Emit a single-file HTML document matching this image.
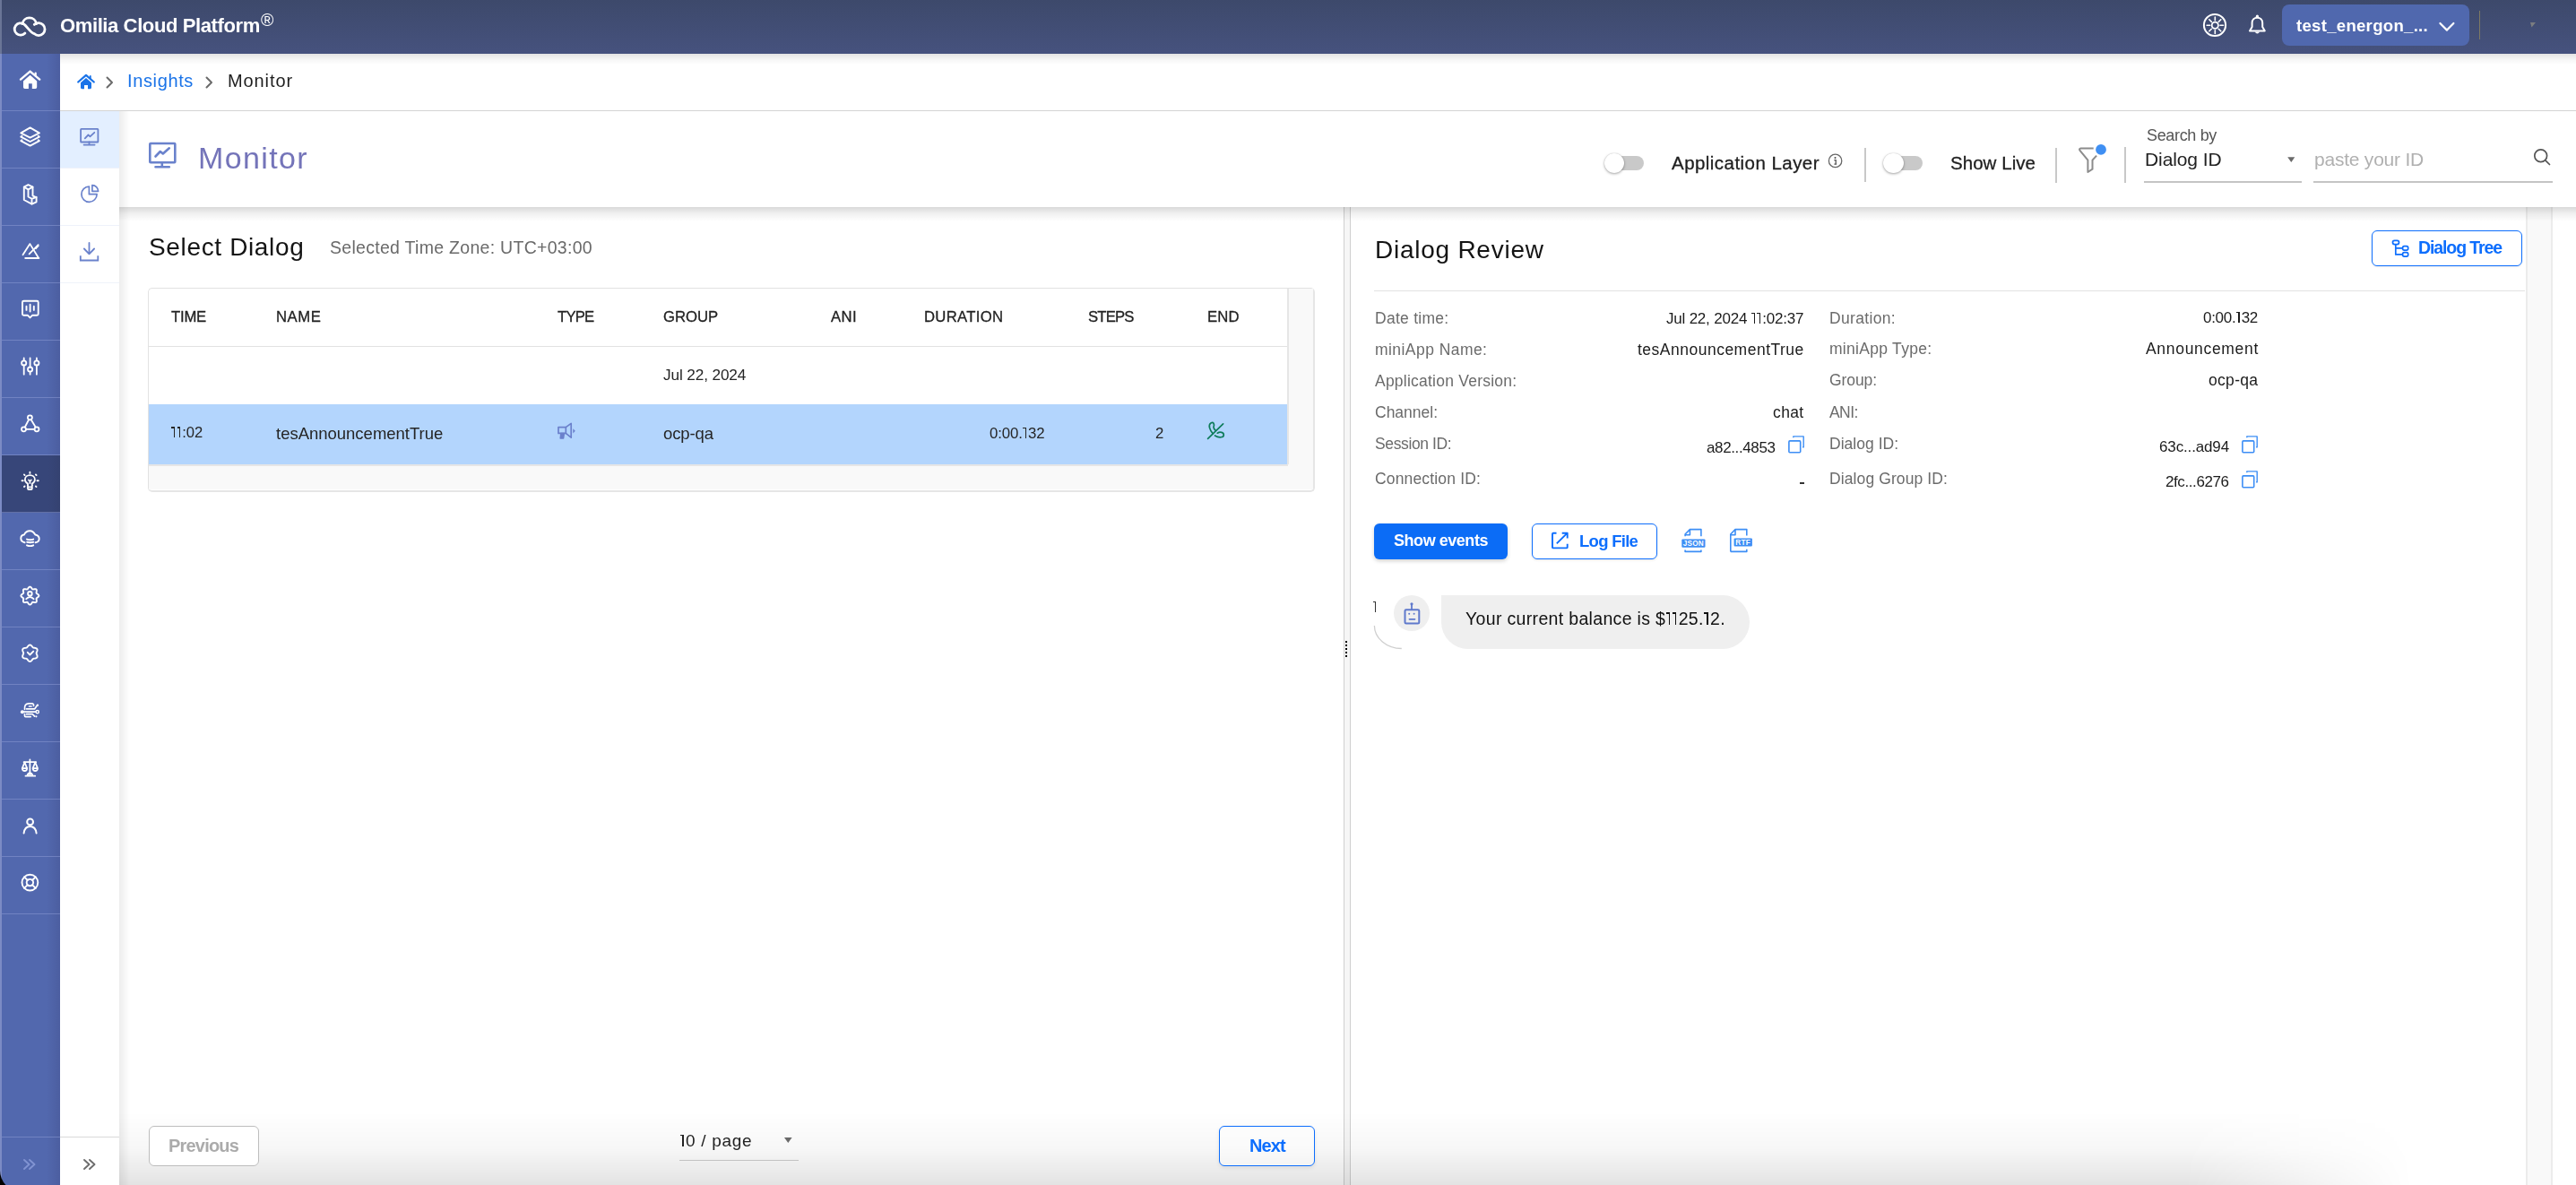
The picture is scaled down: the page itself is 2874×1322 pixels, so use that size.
<!DOCTYPE html><html><head><meta charset="utf-8"><style>
html,body{margin:0;padding:0;}
body{width:2874px;height:1322px;overflow:hidden;position:relative;background:#fff;font-family:"Liberation Sans",sans-serif;}
.t{position:absolute;white-space:nowrap;line-height:1;will-change:transform;}
.b{position:absolute;box-sizing:border-box;}
svg.b{overflow:visible;}
.one{display:inline-block;width:0.37em;height:0.705em;position:relative;}
.one::before{content:'';position:absolute;left:0.17em;top:0;bottom:0;width:0.078em;background:currentColor;}
.one::after{content:'';position:absolute;left:0.03em;top:0;width:0.2em;height:0.075em;background:currentColor;}
</style></head><body>
<div class="b" style="left:0px;top:1270px;width:40px;height:52px;background:#000;"></div>
<div class="b" style="left:0px;top:0px;width:2874px;height:60px;background:linear-gradient(#3d496b,#46527e);"></div>
<div class="b" style="left:0px;top:0px;width:2px;height:60px;background:#6a7596;"></div>
<div class="b" style="left:0px;top:60px;width:67px;height:1269px;background:linear-gradient(90deg,#7c8bc4 0,#7c8bc4 2px,#5268ae 2px,#5268ae 52px,#4c5ea0 67px);border-bottom-left-radius:23px;"></div>
<div class="b" style="left:2px;top:508px;width:65px;height:64px;background:linear-gradient(90deg,#374679 0,#374679 52px,#34416f 67px);"></div>
<div class="b" style="left:2px;top:123px;width:65px;height:1px;background:rgba(150,165,220,0.45);"></div>
<div class="b" style="left:2px;top:187px;width:65px;height:1px;background:rgba(150,165,220,0.45);"></div>
<div class="b" style="left:2px;top:251px;width:65px;height:1px;background:rgba(150,165,220,0.45);"></div>
<div class="b" style="left:2px;top:315px;width:65px;height:1px;background:rgba(150,165,220,0.45);"></div>
<div class="b" style="left:2px;top:379px;width:65px;height:1px;background:rgba(150,165,220,0.45);"></div>
<div class="b" style="left:2px;top:443px;width:65px;height:1px;background:rgba(150,165,220,0.45);"></div>
<div class="b" style="left:2px;top:507px;width:65px;height:1px;background:rgba(150,165,220,0.45);"></div>
<div class="b" style="left:2px;top:571px;width:65px;height:1px;background:rgba(150,165,220,0.45);"></div>
<div class="b" style="left:2px;top:635px;width:65px;height:1px;background:rgba(150,165,220,0.45);"></div>
<div class="b" style="left:2px;top:699px;width:65px;height:1px;background:rgba(150,165,220,0.45);"></div>
<div class="b" style="left:2px;top:763px;width:65px;height:1px;background:rgba(150,165,220,0.45);"></div>
<div class="b" style="left:2px;top:827px;width:65px;height:1px;background:rgba(150,165,220,0.45);"></div>
<div class="b" style="left:2px;top:891px;width:65px;height:1px;background:rgba(150,165,220,0.45);"></div>
<div class="b" style="left:2px;top:955px;width:65px;height:1px;background:rgba(150,165,220,0.45);"></div>
<div class="b" style="left:2px;top:1019px;width:65px;height:1px;background:rgba(150,165,220,0.45);"></div>
<div class="b" style="left:2px;top:1268px;width:65px;height:1px;background:rgba(150,165,220,0.45);"></div>
<div class="b" style="left:67px;top:60px;width:66px;height:1262px;background:#fff;"></div>
<div class="b" style="left:67px;top:124px;width:66px;height:64px;background:#e3efff;"></div>
<div class="b" style="left:67px;top:187px;width:66px;height:1px;background:#eef2fa;"></div>
<div class="b" style="left:67px;top:251px;width:66px;height:1px;background:#eef2fa;"></div>
<div class="b" style="left:67px;top:315px;width:66px;height:1px;background:#eef2fa;"></div>
<div class="b" style="left:67px;top:1268px;width:66px;height:1px;background:#d9d9d9;"></div>
<div class="b" style="left:67px;top:60px;width:2807px;height:63px;background:#fff;"></div>
<div class="b" style="left:67px;top:60px;width:2807px;height:12px;background:linear-gradient(rgba(0,0,0,0.11),rgba(0,0,0,0.03) 60%,rgba(0,0,0,0));"></div>
<div class="b" style="left:67px;top:123px;width:2807px;height:1px;background:#d4d4d4;"></div>
<div class="b" style="left:133px;top:124px;width:12px;height:1198px;background:linear-gradient(90deg,rgba(0,0,0,0.07),rgba(0,0,0,0));"></div>
<div class="b" style="left:1499px;top:231px;width:8px;height:1091px;background:#f6f6f6;border-left:1.5px solid #cfcfcf;border-right:1.5px solid #cfcfcf;"></div>
<div class="b" style="left:2818px;top:231px;width:30px;height:1091px;background:#f9f9f9;border-left:2px solid #ececec;border-right:2px solid #ececec;"></div>
<div class="b" style="left:133px;top:231px;width:2741px;height:16px;background:linear-gradient(rgba(0,0,0,0.15),rgba(0,0,0,0.06) 45%,rgba(0,0,0,0));"></div>
<div class="b" style="left:133px;top:1240px;width:2560px;height:82px;background:linear-gradient(rgba(0,0,0,0),rgba(0,0,0,0.03) 50%,rgba(0,0,0,0.11));-webkit-mask-image:linear-gradient(90deg,#000 90%,transparent 100%);"></div>
<svg class="b" style="left:0px;top:0px;" width="60" height="60" viewBox="0 0 60 60" fill="none"><g stroke="#fff" stroke-width="2.8" stroke-linecap="round" fill="none"><path d="M27.9 37.0 A6.7 6.7 0 1 1 26.6 26.9 C30.5 29.8 34 36.5 38.2 37.6 A7.0 7.0 0 1 0 38.3 27.4"/><path d="M25.0 26.6 A7.9 7.9 0 0 1 40.6 26.6"/></g></svg>
<div class="t" style="left:67.00px;top:18.00px;font-size:22.09px;letter-spacing:-0.428px;color:#fff;font-weight:700;">Omilia Cloud Platform</div>
<div class="t" style="left:290.50px;top:13.00px;font-size:19.50px;letter-spacing:0.632px;color:#fff;">®</div>
<svg class="b" style="left:2440px;top:0px;" width="60" height="60" viewBox="0 0 60 60" fill="none"><g stroke="#fff" fill="none"><circle cx="31" cy="28" r="12.1" stroke-width="2"/><circle cx="31.3" cy="28.3" r="3.6" stroke-width="1.8"/><line x1="36.90" y1="28.30" x2="40.50" y2="28.30" stroke-width="1.6" stroke-linecap="round"/><line x1="25.70" y1="28.30" x2="22.10" y2="28.30" stroke-width="1.6" stroke-linecap="round"/><line x1="31.30" y1="33.90" x2="31.30" y2="37.50" stroke-width="1.6" stroke-linecap="round"/><line x1="31.30" y1="22.70" x2="31.30" y2="19.10" stroke-width="1.6" stroke-linecap="round"/><line x1="35.26" y1="32.26" x2="37.80" y2="34.80" stroke-width="1.6" stroke-linecap="round"/><line x1="27.34" y1="32.26" x2="24.80" y2="34.80" stroke-width="1.6" stroke-linecap="round"/><line x1="35.26" y1="24.34" x2="37.80" y2="21.80" stroke-width="1.6" stroke-linecap="round"/><line x1="27.34" y1="24.34" x2="24.80" y2="21.80" stroke-width="1.6" stroke-linecap="round"/></g></svg>
<svg class="b" style="left:2500px;top:0px;" width="40" height="60" viewBox="0 0 40 60" fill="none"><g stroke="#fff" stroke-width="2" fill="none" stroke-linejoin="round"><path d="M10 34.5 L12.6 30 L12.6 25.6 C12.6 21.8 15.2 19.7 18.4 19.7 C21.6 19.7 24.2 21.8 24.2 25.6 L24.2 30 L26.8 34.5 Z"/></g><path d="M15.6 35.5 Q18.4 39.5 21.2 35.5 Z" fill="#fff"/><circle cx="18.4" cy="18.2" r="1.6" fill="#fff"/></svg>
<div class="b" style="left:2546px;top:5px;width:209px;height:46px;background:#5068ae;border-radius:8px;"></div>
<div class="t" style="left:2562.00px;top:20.00px;font-size:18.60px;letter-spacing:0.272px;color:#fff;font-weight:700;">test_energon_...</div>
<svg class="b" style="left:2715px;top:15px;" width="30" height="30" viewBox="0 0 30 30" fill="none"><path d="M7.4 11 L15 18.6 L22.4 11" stroke="#fff" stroke-width="2.2" fill="none" stroke-linecap="round" stroke-linejoin="round"/></svg>
<div class="b" style="left:2766px;top:12px;width:1.2px;height:32px;background:#7f7a62;"></div>
<svg class="b" style="left:2820px;top:22px;" width="12" height="12" viewBox="0 0 12 12" fill="none"><path d="M3 3 L9 3 L4.5 8.5 Z" fill="#7b7d80"/></svg>
<svg class="b" style="left:13px;top:70px;" width="40" height="40" viewBox="0 0 40 40" fill="none"><path d="M10 18.6 L20.6 9.6 L31.2 18.6" stroke="#fff" fill="none" stroke-linecap="round" stroke-linejoin="round" stroke-width="2.4"/><path d="M26.7 11.5 L26.7 14.5" stroke="#fff" stroke-width="2.2" stroke-linecap="round"/><path d="M13 20.5 L20.6 13.8 L28.2 20.5 L28.2 27.3 Q28.2 29 26.5 29 L22.8 29 L22.8 23.2 L18.9 23.2 L18.9 29 L14.7 29 Q13 29 13 27.3 Z" fill="#fff"/></svg>
<svg class="b" style="left:13px;top:134px;" width="40" height="40" viewBox="0 0 40 40" fill="none"><g stroke="#fff" fill="none" stroke-linecap="round" stroke-linejoin="round" stroke-width="1.9"><path d="M10.3 14.4 L20.6 8.4 L30.9 14.4 L20.6 19.6 Z"/><path d="M11.5 17.8 L10.3 18.6 L20.6 24 L30.9 18.6 L29.7 17.8"/><path d="M11.5 22.3 L10.3 23.1 L20.6 28.6 L30.9 23.1 L29.7 22.3"/></g></svg>
<svg class="b" style="left:13px;top:198px;" width="40" height="40" viewBox="0 0 40 40" fill="none"><g stroke="#fff" fill="none" stroke-linecap="round" stroke-linejoin="round" stroke-width="1.9"><path d="M13.8 10.7 L18.5 8.2 L23.5 10.6 L23.5 20.3 L27.6 22.3 L27.6 27.3 L22.5 29.6 L13.8 25 Z"/><path d="M13.8 10.7 L18.5 13.3 L23.5 10.6 M18.5 13.3 L18.5 21.5 L22.5 23.8 L27.6 21.8 M22.5 23.8 L22.5 29.6"/></g></svg>
<svg class="b" style="left:13px;top:262px;" width="40" height="40" viewBox="0 0 40 40" fill="none"><g stroke="#fff" fill="none" stroke-linecap="round" stroke-linejoin="round" stroke-width="1.8"><path d="M12.5 22.3 L20.4 10.1 L29.7 25.3"/><path d="M15.2 26 L30.4 26"/><path d="M19.6 21.3 L29.7 11.1"/></g><path d="M25.5 15.5 L29 11 L30.8 12.2 L27.3 16.3 Z" fill="#fff"/></svg>
<svg class="b" style="left:13px;top:326px;" width="40" height="40" viewBox="0 0 40 40" fill="none"><g stroke="#fff" fill="none" stroke-linecap="round" stroke-linejoin="round" stroke-width="1.9"><path d="M13.5 9.8 L28.2 9.8 Q29.7 9.8 29.7 11.3 L29.7 24.2 Q29.7 25.7 28.2 25.7 L23.2 25.7 L20.5 28.4 L17.8 25.7 L13.5 25.7 Q12 25.7 12 24.2 L12 11.3 Q12 9.8 13.5 9.8 Z"/><path d="M16.5 15.7 L16.5 19.9 M20.6 13.7 L20.6 21.6 M24.8 15.7 L24.8 19.9"/></g></svg>
<svg class="b" style="left:13px;top:390px;" width="40" height="40" viewBox="0 0 40 40" fill="none"><g stroke="#fff" fill="none" stroke-linecap="round" stroke-linejoin="round" stroke-width="1.8"><path d="M13.7 9.5 L13.7 12.3 M13.7 17.5 L13.7 27.7 M20.6 9.5 L20.6 19.5 M20.6 24.7 L20.6 27.7 M27.9 9.5 L27.9 12.3 M27.9 17.5 L27.9 27.7"/><circle cx="13.7" cy="14.9" r="2.6"/><circle cx="20.6" cy="22.1" r="2.6"/><circle cx="27.9" cy="14.9" r="2.6"/></g></svg>
<svg class="b" style="left:13px;top:454px;" width="40" height="40" viewBox="0 0 40 40" fill="none"><g stroke="#fff" fill="none" stroke-linecap="round" stroke-linejoin="round" stroke-width="1.8"><circle cx="20.4" cy="11.8" r="2.5"/><circle cx="13.5" cy="24.8" r="2.5"/><circle cx="28" cy="24.8" r="2.5"/><path d="M19.2 14 L14.8 22.5 M21.6 14 L26.7 22.5 M16 24.8 L25.5 24.8"/></g></svg>
<svg class="b" style="left:13px;top:518px;" width="40" height="40" viewBox="0 0 40 40" fill="none"><g stroke="#fff" fill="none" stroke-linecap="round" stroke-linejoin="round" stroke-width="1.8"><path d="M18 23.2 L18 21.6 C15.6 20.3 14.9 18.5 14.9 17 C14.9 14 17.3 12.1 20.4 12.1 C23.5 12.1 25.9 14 25.9 17 C25.9 18.5 25.2 20.3 22.8 21.6 L22.8 23.2"/><path d="M18 23.2 L18 27 Q18 28 19 28 L21.8 28 Q22.8 28 22.8 27 L22.8 23.2 M18 25.3 L22.8 25.3"/><path d="M19 17.5 L20.4 19 L21.8 17.5 M20.4 19 L20.4 21"/></g><g stroke="#fff" stroke-width="1.9" stroke-linecap="round"><path d="M20.4 8.8 L20.4 9.9 M13.9 11.4 L14.6 12.1 M26.9 11.4 L27.6 12.1 M11.5 18.2 L12.7 18.2 M28.5 18.2 L29.8 18.2 M14 25 L14.6 24.4 M27.5 25 L26.9 24.4"/></g></svg>
<svg class="b" style="left:13px;top:582px;" width="40" height="40" viewBox="0 0 40 40" fill="none"><g stroke="#fff" fill="none" stroke-linecap="round" stroke-linejoin="round" stroke-width="1.9"><path d="M14.6 23.3 C11.6 22.6 10.3 20.6 10.3 18.6 C10.3 16.3 12 14.7 14 14.5 C15.2 11.6 17.6 10.2 20.4 10.2 C23.4 10.2 25.1 12.2 26.3 14.5 C28.7 15 30.7 16.5 30.7 19 C30.7 21.2 29.2 22.8 26.6 23.3"/><path d="M17 19.6 Q20.7 21 24.2 19.6 M17.2 22.8 Q20.7 23.6 24.2 22.8 M17 26.3 Q20.7 28 24.2 26.3"/></g></svg>
<svg class="b" style="left:13px;top:646px;" width="40" height="40" viewBox="0 0 40 40" fill="none"><g stroke="#fff" fill="none" stroke-linecap="round" stroke-linejoin="round" stroke-width="1.9"><path d="M20.40 8.60 L21.04 8.77 L21.63 9.23 L22.14 9.87 L22.56 10.53 L22.95 11.07 L23.38 11.39 L23.92 11.47 L24.57 11.37 L25.34 11.20 L26.15 11.10 L26.90 11.19 L27.47 11.53 L27.81 12.10 L27.90 12.85 L27.80 13.66 L27.63 14.43 L27.53 15.08 L27.61 15.62 L27.93 16.05 L28.47 16.44 L29.13 16.86 L29.77 17.37 L30.23 17.96 L30.40 18.60 L30.23 19.24 L29.77 19.83 L29.13 20.34 L28.47 20.76 L27.93 21.15 L27.61 21.58 L27.53 22.12 L27.63 22.77 L27.80 23.54 L27.90 24.35 L27.81 25.10 L27.47 25.67 L26.90 26.01 L26.15 26.10 L25.34 26.00 L24.57 25.83 L23.92 25.73 L23.38 25.81 L22.95 26.13 L22.56 26.67 L22.14 27.33 L21.63 27.97 L21.04 28.43 L20.40 28.60 L19.76 28.43 L19.17 27.97 L18.66 27.33 L18.24 26.67 L17.85 26.13 L17.42 25.81 L16.88 25.73 L16.23 25.83 L15.46 26.00 L14.65 26.10 L13.90 26.01 L13.33 25.67 L12.99 25.10 L12.90 24.35 L13.00 23.54 L13.17 22.78 L13.27 22.12 L13.19 21.58 L12.87 21.15 L12.33 20.76 L11.67 20.34 L11.03 19.83 L10.57 19.24 L10.40 18.60 L10.57 17.96 L11.03 17.37 L11.67 16.86 L12.33 16.44 L12.87 16.05 L13.19 15.62 L13.27 15.08 L13.17 14.43 L13.00 13.66 L12.90 12.85 L12.99 12.10 L13.33 11.53 L13.90 11.19 L14.65 11.10 L15.46 11.20 L16.22 11.37 L16.88 11.47 L17.42 11.39 L17.85 11.07 L18.24 10.53 L18.66 9.87 L19.17 9.23 L19.76 8.77 Z"/><circle cx="20.4" cy="16.3" r="2.3"/><path d="M16.3 22.2 Q20.4 17.8 24.5 22.2"/></g></svg>
<svg class="b" style="left:13px;top:710px;" width="40" height="40" viewBox="0 0 40 40" fill="none"><g stroke="#fff" fill="none" stroke-linecap="round" stroke-linejoin="round" stroke-width="1.9"><path d="M20.40 9.50 L21.00 9.60 L21.56 9.87 L22.07 10.28 L22.52 10.78 L22.91 11.30 L23.27 11.78 L23.62 12.17 L24.00 12.46 L24.44 12.65 L24.96 12.76 L25.55 12.82 L26.20 12.90 L26.85 13.04 L27.47 13.28 L27.99 13.63 L28.37 14.10 L28.58 14.66 L28.63 15.29 L28.53 15.94 L28.32 16.58 L28.07 17.17 L27.83 17.72 L27.66 18.22 L27.60 18.70 L27.66 19.18 L27.83 19.68 L28.07 20.23 L28.32 20.82 L28.53 21.46 L28.63 22.11 L28.58 22.74 L28.37 23.30 L27.99 23.77 L27.47 24.12 L26.85 24.36 L26.20 24.50 L25.55 24.58 L24.96 24.64 L24.44 24.75 L24.00 24.94 L23.62 25.23 L23.27 25.62 L22.91 26.10 L22.52 26.62 L22.07 27.12 L21.56 27.53 L21.00 27.80 L20.40 27.90 L19.80 27.80 L19.24 27.53 L18.73 27.12 L18.28 26.62 L17.89 26.10 L17.53 25.62 L17.18 25.23 L16.80 24.94 L16.36 24.75 L15.84 24.64 L15.25 24.58 L14.60 24.50 L13.95 24.36 L13.33 24.12 L12.81 23.77 L12.43 23.30 L12.22 22.74 L12.17 22.11 L12.27 21.46 L12.48 20.82 L12.73 20.23 L12.97 19.68 L13.14 19.18 L13.20 18.70 L13.14 18.22 L12.97 17.72 L12.73 17.17 L12.48 16.58 L12.27 15.94 L12.17 15.29 L12.22 14.66 L12.43 14.10 L12.81 13.63 L13.33 13.28 L13.95 13.04 L14.60 12.90 L15.25 12.82 L15.84 12.76 L16.36 12.65 L16.80 12.46 L17.18 12.17 L17.53 11.78 L17.89 11.30 L18.28 10.78 L18.73 10.28 L19.24 9.87 L19.80 9.60 Z"/><path d="M17.8 17.8 L20.4 20.5 L24.2 16.6"/></g></svg>
<svg class="b" style="left:13px;top:774px;" width="40" height="40" viewBox="0 0 40 40" fill="none"><g stroke="#fff" fill="none" stroke-linecap="round" stroke-linejoin="round" stroke-width="1.7"><path d="M14.5 17.3 Q14 11 19 10.8 L23 10.8 Q24.8 11 24.5 13.5"/><path d="M19.5 14 L22 14"/><path d="M16.5 16.8 L25.8 16.8 L28.2 13.3"/><path d="M13.5 20.2 L26.8 20.2"/><path d="M14.5 22.5 L14.5 24.5 Q14.5 25.6 15.6 25.6 L21.2 25.6"/><path d="M16.5 22.7 L23.2 22.7 L25.6 25.2"/></g><circle cx="11.9" cy="20.2" r="2" fill="#fff"/><circle cx="28.7" cy="20.2" r="1.6" stroke="#fff" stroke-width="1.5" fill="none"/><circle cx="28.9" cy="12.7" r="1.2" fill="#fff"/><circle cx="27.4" cy="25.3" r="1.1" fill="#fff"/></svg>
<svg class="b" style="left:13px;top:838px;" width="40" height="40" viewBox="0 0 40 40" fill="none"><g stroke="#fff" fill="none" stroke-linecap="round" stroke-linejoin="round" stroke-width="1.8"><path d="M20.4 9.5 L20.4 26.5 M13.6 12.2 L27.2 12.2"/><path d="M14.5 12.5 L11.8 19.2 Q12 22 14.5 22 Q17 22 17.2 19.2 Z M11.8 19.2 L17.2 19.2"/><path d="M26.3 12.5 L23.6 19.2 Q23.8 22 26.3 22 Q28.8 22 29 19.2 Z M23.6 19.2 L29 19.2"/><path d="M15.5 27.7 L26.2 27.7 M17.4 27.5 Q18 24.8 20.4 24.5 Q22.8 24.8 23.4 27.5"/></g></svg>
<svg class="b" style="left:13px;top:902px;" width="40" height="40" viewBox="0 0 40 40" fill="none"><g stroke="#fff" fill="none" stroke-linecap="round" stroke-linejoin="round" stroke-width="2"><circle cx="20.6" cy="14.9" r="3.4"/><path d="M13.6 27.5 Q14.5 20 20.6 20 Q26.7 20 27.6 27.5"/></g></svg>
<svg class="b" style="left:13px;top:966px;" width="40" height="40" viewBox="0 0 40 40" fill="none"><g stroke="#fff" fill="none" stroke-linecap="round" stroke-linejoin="round" stroke-width="1.9"><circle cx="20.4" cy="18.6" r="8.9"/><circle cx="20.4" cy="18.6" r="3.7"/><path d="M14.1 12.3 L17.8 16 M26.7 12.3 L23 16 M14.1 24.9 L17.8 21.2 M26.7 24.9 L23 21.2"/></g></svg>
<svg class="b" style="left:20px;top:1285px;" width="30" height="30" viewBox="0 0 30 30" fill="none"><path d="M7 9 L12.5 14 L7 19 M13 9 L18.5 14 L13 19" stroke="#8193d2" stroke-width="1.9" fill="none" stroke-linecap="round" stroke-linejoin="round"/></svg>
<svg class="b" style="left:87px;top:1285px;" width="30" height="30" viewBox="0 0 30 30" fill="none"><path d="M7 9 L12.5 14 L7 19 M13 9 L18.5 14 L13 19" stroke="#6d6d6d" stroke-width="1.9" fill="none" stroke-linecap="round" stroke-linejoin="round"/></svg>
<svg class="b" style="left:80px;top:133px;" width="40" height="40" viewBox="0 0 40 40" fill="none"><g stroke="#6a82cc" fill="none" stroke-linecap="round" stroke-linejoin="round" stroke-width="1.8"><rect x="10.1" y="10.8" width="19.3" height="14.7" rx="0.6"/><path d="M19.5 25.5 L19.5 28.6 M13.6 28.6 L25.6 28.6"/><path d="M14.8 21.3 L18.5 17.5 L20.5 19.3 L25.3 14.8"/></g></svg>
<svg class="b" style="left:80px;top:197px;" width="40" height="40" viewBox="0 0 40 40" fill="none"><g stroke="#6a82cc" fill="none" stroke-linecap="round" stroke-linejoin="round" stroke-width="1.7"><path d="M19.4 11.1 A8.6 8.6 0 1 0 28.1 19.7 L19.4 19.7 Z"/><path d="M22.9 9.6 L22.9 16.3 L29.6 16.3 A6.8 6.8 0 0 0 22.9 9.6 Z"/></g></svg>
<svg class="b" style="left:80px;top:261px;" width="40" height="40" viewBox="0 0 40 40" fill="none"><g stroke="#6a82cc" fill="none" stroke-linecap="round" stroke-linejoin="round" stroke-width="1.8"><path d="M19.5 10 L19.5 22.3 M13.9 16.5 L19.5 22.3 L25.1 16.5"/><path d="M9.8 24.3 L9.8 29.5 L29.3 29.5 L29.3 24.3" stroke-linecap="butt" stroke-linejoin="miter"/></g></svg>
<svg class="b" style="left:84px;top:80px;" width="24" height="24" viewBox="0 0 24 24" fill="none"><path d="M3.2 11.5 L12 3.8 L20.8 11.5" stroke="#1a73e8" stroke-width="2.2" fill="none" stroke-linecap="round" stroke-linejoin="round"/><path d="M16.8 5 L16.8 8" stroke="#1a73e8" stroke-width="1.8" stroke-linecap="round"/><path d="M6 12.3 L12 7 L18 12.3 L18 17.8 Q18 19.2 16.6 19.2 L14 19.2 L14 15 L10 15 L10 19.2 L7.4 19.2 Q6 19.2 6 17.8 Z" fill="#1a73e8"/></svg>
<svg class="b" style="left:112px;top:80px;" width="20" height="24" viewBox="0 0 20 24" fill="none"><path d="M7.5 6.5 L13 12 L7.5 17.5" stroke="#6b6b6b" stroke-width="2" fill="none" stroke-linecap="round" stroke-linejoin="round"/></svg>
<div class="t" style="left:142.00px;top:80.00px;font-size:20.00px;letter-spacing:0.634px;color:#1a73e8;">Insights</div>
<svg class="b" style="left:223px;top:80px;" width="20" height="24" viewBox="0 0 20 24" fill="none"><path d="M7.5 6.5 L13 12 L7.5 17.5" stroke="#6b6b6b" stroke-width="2" fill="none" stroke-linecap="round" stroke-linejoin="round"/></svg>
<div class="t" style="left:254.00px;top:80.00px;font-size:20.00px;letter-spacing:0.901px;color:#1e1e1e;">Monitor</div>
<svg class="b" style="left:150px;top:142px;" width="60" height="60" viewBox="0 0 60 60" fill="none"><g stroke="#6a82cc" fill="none" stroke-linecap="round" stroke-linejoin="round" stroke-width="2.6"><rect x="17.3" y="18" width="28" height="21.3" rx="0.8"/><path d="M30.8 39.3 L30.8 44 M23.5 44.2 L38.8 44.2"/><path d="M23.5 32.5 L28.8 27 L31.8 29.5 L38.8 23.3"/></g></svg>
<div class="t" style="left:221.00px;top:159.00px;font-size:34.00px;letter-spacing:1.375px;color:#7474b9;">Monitor</div>
<div class="b" style="left:1799.5px;top:174px;width:34px;height:16px;background:#c9c9c9;border-radius:8px;"></div>
<div class="b" style="left:1789.5px;top:170.5px;width:22.5px;height:22.5px;background:#fff;border-radius:50%;box-shadow:0 1px 3px rgba(0,0,0,0.35),0 0 1px rgba(0,0,0,0.2);"></div>
<div class="t" style="left:1865.00px;top:172.00px;font-size:20.50px;letter-spacing:0.455px;color:#1e1e1e;-webkit-text-stroke:0.3px #1e1e1e;">Application Layer</div>
<svg class="b" style="left:2036px;top:168px;" width="24" height="24" viewBox="0 0 24 24" fill="none"><circle cx="11.6" cy="11.4" r="7.2" stroke="#666" stroke-width="1.3" fill="none"/><circle cx="11.5" cy="8.1" r="1.05" fill="#555"/><path d="M10.3 10.6 L12.2 10.6 L12.2 15.2 L13.1 15.2 M10.4 15.2 L13 15.2" stroke="#555" stroke-width="1.3" fill="none"/></svg>
<div class="b" style="left:2080px;top:165px;width:1.5px;height:38px;background:#c8c8c8;"></div>
<div class="b" style="left:2111px;top:174px;width:34px;height:16px;background:#c9c9c9;border-radius:8px;"></div>
<div class="b" style="left:2101px;top:170.5px;width:22.5px;height:22.5px;background:#fff;border-radius:50%;box-shadow:0 1px 3px rgba(0,0,0,0.35),0 0 1px rgba(0,0,0,0.2);"></div>
<div class="t" style="left:2176.00px;top:172.00px;font-size:20.50px;letter-spacing:0.046px;color:#1e1e1e;-webkit-text-stroke:0.3px #1e1e1e;">Show Live</div>
<div class="b" style="left:2293px;top:165px;width:1.5px;height:39px;background:#c8c8c8;"></div>
<svg class="b" style="left:2310px;top:150px;" width="50" height="50" viewBox="0 0 50 50" fill="none"><path d="M25.7 15.4 L11.5 15.4 Q9.4 15.8 10.3 17.6 L19.4 28.7 L19.4 42 L24.5 38.7 L24.5 28.7 L29.1 23.6" stroke="#8c8c8c" stroke-width="2" fill="none" stroke-linejoin="round"/><circle cx="34" cy="16.9" r="5.9" fill="#3f8ff3"/></svg>
<div class="b" style="left:2370px;top:164px;width:1.5px;height:40px;background:#c8c8c8;"></div>
<div class="t" style="left:2394.70px;top:142.00px;font-size:18.00px;letter-spacing:-0.338px;color:#555;">Search by</div>
<div class="t" style="left:2392.50px;top:167.00px;font-size:21.00px;letter-spacing:-0.097px;color:#222;">Dialog ID</div>
<svg class="b" style="left:2548px;top:170px;" width="16" height="16" viewBox="0 0 16 16" fill="none"><path d="M4.2 5.2 L12.3 5.2 L8.3 11.1 Z" fill="#6a6a6a"/></svg>
<div class="b" style="left:2392px;top:202px;width:176px;height:1.5px;background:#c4c4c4;"></div>
<div class="t" style="left:2582.00px;top:167.00px;font-size:21.00px;letter-spacing:-0.223px;color:#b0b0b0;">paste your ID</div>
<div class="b" style="left:2581px;top:202px;width:267px;height:1.5px;background:#c4c4c4;"></div>
<svg class="b" style="left:2816px;top:155px;" width="40" height="40" viewBox="0 0 40 40" fill="none"><circle cx="18.7" cy="18.7" r="6.9" stroke="#555" stroke-width="1.7" fill="none"/><path d="M23.8 23.8 L28.5 28.5" stroke="#555" stroke-width="1.7" stroke-linecap="round"/></svg>
<div class="t" style="left:166.00px;top:262.00px;font-size:28.00px;letter-spacing:0.648px;color:#141414;">Select Dialog</div>
<div class="t" style="left:368.00px;top:267.00px;font-size:19.50px;letter-spacing:0.292px;color:#6a6a6a;">Selected Time Zone: UTC+03:00</div>
<div class="b" style="left:165px;top:321px;width:1302px;height:228px;border:1px solid #e2e2e2;border-right:2.5px solid #e6e6e6;border-bottom:2.5px solid #e6e6e6;border-radius:5px;background:#fff;overflow:hidden;"></div>
<div class="b" style="left:166px;top:386px;width:1271px;height:1px;background:#e2e2e2;"></div>
<div class="b" style="left:166px;top:451px;width:1271px;height:67px;background:#b3d5fd;"></div>
<div class="b" style="left:1436px;top:322px;width:29px;height:224px;background:#f9f9f9;"></div>
<div class="b" style="left:1436px;top:322px;width:1.8px;height:197.8px;background:#e6e6e6;"></div>
<div class="b" style="left:166px;top:518px;width:1299px;height:28px;background:#f9f9f9;"></div>
<div class="b" style="left:166px;top:518px;width:1271px;height:1.8px;background:#e6e6e6;"></div>
<div class="t" style="left:190.70px;top:346.00px;font-size:16.70px;letter-spacing:-0.223px;color:#222;-webkit-text-stroke:0.3px #222;">TIME</div>
<div class="t" style="left:308.00px;top:346.00px;font-size:16.70px;letter-spacing:0.538px;color:#222;-webkit-text-stroke:0.3px #222;">NAME</div>
<div class="t" style="left:621.50px;top:346.00px;font-size:16.70px;letter-spacing:-0.779px;color:#222;-webkit-text-stroke:0.3px #222;">TYPE</div>
<div class="t" style="left:740.30px;top:346.00px;font-size:16.70px;letter-spacing:-0.028px;color:#222;-webkit-text-stroke:0.3px #222;">GROUP</div>
<div class="t" style="left:927.00px;top:346.00px;font-size:16.70px;letter-spacing:0.387px;color:#222;-webkit-text-stroke:0.3px #222;">ANI</div>
<div class="t" style="left:1031.00px;top:346.00px;font-size:16.70px;letter-spacing:0.304px;color:#222;-webkit-text-stroke:0.3px #222;">DURATION</div>
<div class="t" style="left:1214.00px;top:346.00px;font-size:16.70px;letter-spacing:-0.811px;color:#222;-webkit-text-stroke:0.3px #222;">STEPS</div>
<div class="t" style="left:1347.00px;top:346.00px;font-size:16.70px;letter-spacing:0.180px;color:#222;-webkit-text-stroke:0.3px #222;">END</div>
<div class="t" style="left:740.00px;top:410.00px;font-size:17.20px;letter-spacing:-0.118px;color:#252525;">Jul 22, 2024</div>
<div class="t" style="left:190.70px;top:475.00px;font-size:16.60px;letter-spacing:-0.027px;color:#252525;"><span class="one"></span><span class="one"></span>:02</div>
<div class="t" style="left:308.00px;top:475.00px;font-size:18.50px;letter-spacing:-0.010px;color:#252525;">tesAnnouncementTrue</div>
<div class="t" style="left:740.00px;top:475.00px;font-size:18.50px;letter-spacing:-0.094px;color:#252525;">ocp-qa</div>
<div class="t" style="left:1104.00px;top:476.00px;font-size:16.80px;letter-spacing:-0.109px;color:#252525;">0:00.<span class="one"></span>32</div>
<div class="t" style="left:1289.00px;top:476.00px;font-size:16.80px;letter-spacing:0.157px;color:#252525;">2</div>
<svg class="b" style="left:612px;top:462px;" width="40" height="40" viewBox="0 0 40 40" fill="none"><g stroke="#6b80cc" fill="none" stroke-linejoin="round"><rect x="11" y="14.6" width="8.3" height="6.8" stroke-width="1.7"/><path d="M19.3 14.6 L25.2 10.4 L25.2 26.2 L19.3 21.4" stroke-width="1.7"/><path d="M13.8 21.5 L17.4 21.5 L16.6 27 L13.2 27 Z" stroke-width="1.5" fill="#6b80cc"/></g><path d="M27.3 16.2 L29.8 18.7 L27.3 21.5 Z" fill="#6b80cc"/></svg>
<svg class="b" style="left:1337px;top:462px;" width="40" height="40" viewBox="0 0 40 40" fill="none"><g stroke="#0e7c5b" stroke-width="1.7" fill="none" stroke-linecap="round"><path d="M10.6 27.3 L27.6 10.9"/><path d="M16.2 21.8 C12.6 17.6 10.6 12.2 14 9.9 C16.6 8.6 18.4 10.7 17 14.6 C17.2 16.4 18.2 17.4 19 18"/><path d="M21.3 21.2 C24.2 19.2 28.3 20.3 28.3 23.2 C28.3 26.2 23 26.8 18.5 24"/></g></svg>
<div class="t" style="left:1534.30px;top:265.00px;font-size:28.00px;letter-spacing:0.749px;color:#141414;">Dialog Review</div>
<div class="b" style="left:2646px;top:257px;width:168px;height:39.5px;border:1.8px solid #0d6efd;border-radius:6px;box-shadow:0 1px 2px rgba(0,0,0,0.08);"></div>
<svg class="b" style="left:2660px;top:255px;" width="40" height="40" viewBox="0 0 40 40" fill="none"><g stroke="#0d6efd" stroke-width="1.7" fill="none" stroke-linejoin="round"><rect x="9.5" y="13.3" width="7" height="4.3" rx="2"/><rect x="20.6" y="19.6" width="6.1" height="4.5" rx="1.8"/><rect x="20.6" y="26.6" width="6.1" height="4.5" rx="1.8"/><path d="M12.8 17.6 L12.8 28.9 L20.6 28.9 M12.8 21.8 L20.6 21.8"/></g></svg>
<div class="t" style="left:2698.00px;top:267.00px;font-size:19.50px;letter-spacing:-1.102px;color:#0d6efd;font-weight:700;">Dialog Tree</div>
<div class="b" style="left:1533px;top:324px;width:1284px;height:1.3px;background:#e2e2e2;"></div>
<div class="t" style="left:1534.20px;top:347.00px;font-size:17.50px;letter-spacing:0.265px;color:#6b6b6b;">Date time:</div>
<div class="t" style="right:861.61px;top:347.00px;font-size:17.00px;letter-spacing:-0.207px;color:#1c1c1c;">Jul 22, 2024 <span class="one"></span><span class="one"></span>:02:37</div>
<div class="t" style="left:1534.20px;top:382.00px;font-size:17.50px;letter-spacing:0.444px;color:#6b6b6b;">miniApp Name:</div>
<div class="t" style="right:860.91px;top:382.00px;font-size:17.50px;letter-spacing:0.495px;color:#1c1c1c;">tesAnnouncementTrue</div>
<div class="t" style="left:1534.20px;top:417.00px;font-size:17.50px;letter-spacing:0.230px;color:#6b6b6b;">Application Version:</div>
<div class="t" style="left:1534.20px;top:452.00px;font-size:17.50px;letter-spacing:-0.006px;color:#6b6b6b;">Channel:</div>
<div class="t" style="right:861.02px;top:452.00px;font-size:17.50px;letter-spacing:0.381px;color:#1c1c1c;">chat</div>
<div class="t" style="left:1534.20px;top:487.00px;font-size:17.50px;letter-spacing:-0.380px;color:#6b6b6b;">Session ID:</div>
<div class="t" style="right:893.78px;top:491.00px;font-size:17.00px;letter-spacing:-0.375px;color:#1c1c1c;">a82...4853</div>
<div class="t" style="left:1534.20px;top:526.00px;font-size:17.50px;letter-spacing:0.160px;color:#6b6b6b;">Connection ID:</div>
<div class="b" style="left:2008px;top:538px;width:4.5px;height:1.5px;background:#333;"></div>
<div class="t" style="left:2040.60px;top:347.00px;font-size:17.50px;letter-spacing:0.332px;color:#6b6b6b;">Duration:</div>
<div class="t" style="right:355.29px;top:346.00px;font-size:17.00px;letter-spacing:-0.289px;color:#1c1c1c;">0:00.<span class="one"></span>32</div>
<div class="t" style="left:2040.60px;top:381.00px;font-size:17.50px;letter-spacing:0.294px;color:#6b6b6b;">miniApp Type:</div>
<div class="t" style="right:354.31px;top:381.00px;font-size:17.50px;letter-spacing:0.690px;color:#1c1c1c;">Announcement</div>
<div class="t" style="left:2040.60px;top:416.00px;font-size:17.50px;letter-spacing:-0.083px;color:#6b6b6b;">Group:</div>
<div class="t" style="right:354.68px;top:416.00px;font-size:17.50px;letter-spacing:0.315px;color:#1c1c1c;">ocp-qa</div>
<div class="t" style="left:2040.60px;top:452.00px;font-size:17.50px;letter-spacing:-0.559px;color:#6b6b6b;">ANI:</div>
<div class="t" style="left:2040.60px;top:487.00px;font-size:17.50px;letter-spacing:0.036px;color:#6b6b6b;">Dialog ID:</div>
<div class="t" style="right:386.64px;top:490.00px;font-size:17.00px;letter-spacing:-0.140px;color:#1c1c1c;">63c...ad94</div>
<div class="t" style="left:2040.60px;top:526.00px;font-size:17.50px;letter-spacing:0.104px;color:#6b6b6b;">Dialog Group ID:</div>
<div class="t" style="right:386.91px;top:529.00px;font-size:17.00px;letter-spacing:-0.407px;color:#1c1c1c;">2fc...6276</div>
<svg class="b" style="left:1990px;top:480px;" width="30" height="30" viewBox="0 0 30 30" fill="none"><g stroke="#3d8ef5" fill="none" stroke-linejoin="round"><rect x="5.9" y="11.9" width="12.8" height="12.8" rx="1" stroke-width="1.6"/><path d="M10.8 8.3 L10.8 6.9 L22.2 6.9 L22.2 18.9 L21 18.9" stroke-width="1.4"/></g></svg>
<svg class="b" style="left:2496px;top:480px;" width="30" height="30" viewBox="0 0 30 30" fill="none"><g stroke="#3d8ef5" fill="none" stroke-linejoin="round"><rect x="5.9" y="11.9" width="12.8" height="12.8" rx="1" stroke-width="1.6"/><path d="M10.8 8.3 L10.8 6.9 L22.2 6.9 L22.2 18.9 L21 18.9" stroke-width="1.4"/></g></svg>
<svg class="b" style="left:2496px;top:519px;" width="30" height="30" viewBox="0 0 30 30" fill="none"><g stroke="#3d8ef5" fill="none" stroke-linejoin="round"><rect x="5.9" y="11.9" width="12.8" height="12.8" rx="1" stroke-width="1.6"/><path d="M10.8 8.3 L10.8 6.9 L22.2 6.9 L22.2 18.9 L21 18.9" stroke-width="1.4"/></g></svg>
<div class="b" style="left:1533px;top:584.3px;width:149px;height:39.4px;background:#0b6cf6;border-radius:6px;box-shadow:0 2px 4px rgba(0,0,0,0.18);"></div>
<div class="t" style="left:1555.00px;top:594.00px;font-size:18.00px;letter-spacing:-0.457px;color:#fff;font-weight:700;">Show events</div>
<div class="b" style="left:1709px;top:584.3px;width:140px;height:39.4px;border:1.8px solid #0d6efd;border-radius:6px;box-shadow:0 1px 3px rgba(0,0,0,0.1);"></div>
<svg class="b" style="left:1725px;top:588px;" width="30" height="30" viewBox="0 0 30 30" fill="none"><g stroke="#0d6efd" stroke-width="1.9" fill="none" stroke-linecap="butt" stroke-linejoin="round"><path d="M11.5 6.7 L8 6.7 Q7 6.7 7 7.7 L7 22.4 Q7 23.4 8 23.4 L22.7 23.4 Q23.7 23.4 23.7 22.4 L23.7 18.7"/><path d="M11.8 18.4 L23.4 6.9 M17.7 6.7 L23.7 6.7 L23.7 12.4"/></g></svg>
<div class="t" style="left:1761.50px;top:595.00px;font-size:18.50px;letter-spacing:-0.714px;color:#0d6efd;font-weight:700;">Log File</div>
<svg class="b" style="left:1870px;top:585px;" width="90" height="35" viewBox="0 0 90 35" fill="none"><g stroke="#3d8ef5" stroke-width="1.6" fill="none" stroke-linejoin="round"><path d="M10.1 13.3 L10.1 11 L15.4 5.6 L27.9 5.6 L27.9 13.3 M15.4 5.6 L15.4 11.8 L10.1 11.8 M10.1 28.4 L10.1 30.4 L27.9 30.4 L27.9 28.4"/><path d="M60.8 30.4 L60.8 11 L66 5.6 L78.8 5.6 L78.8 12.4 M66 5.6 L66 11.8 L60.8 11.8 M60.8 30.4 L78.8 30.4 L78.8 27.7"/></g><rect x="6.3" y="16.4" width="26.2" height="9.3" rx="1" fill="#3d8ef5"/><rect x="64.6" y="15.4" width="20.3" height="9.2" rx="1" fill="#3d8ef5"/><text x="19.4" y="24" font-family="Liberation Sans" font-weight="700" font-size="8.2" fill="#fff" text-anchor="middle" letter-spacing="0.2">JSON</text><text x="74.7" y="23" font-family="Liberation Sans" font-weight="700" font-size="8.2" fill="#fff" text-anchor="middle" letter-spacing="0.3">RTF</text></svg>
<div class="t" style="left:1531.00px;top:669.00px;font-size:17.00px;letter-spacing:0.007px;color:#333;"><span class="one"></span></div>
<div class="b" style="left:1555px;top:664px;width:40px;height:40px;background:#efefef;border-radius:50%;"></div>
<svg class="b" style="left:1555px;top:664px;" width="40" height="40" viewBox="0 0 40 40" fill="none"><g stroke="#5f79cc" fill="none"><rect x="12.5" y="16.3" width="15.8" height="15.2" rx="1.3" stroke-width="2"/><path d="M20 16.3 L20 10.5" stroke-width="1.8"/><path d="M17.5 26.8 L23.5 26.8" stroke-width="1.8" stroke-linecap="round"/></g><circle cx="20" cy="9.8" r="1.6" fill="#5f79cc"/><circle cx="17.2" cy="20.8" r="1" fill="#5f79cc"/><circle cx="22.6" cy="20.8" r="1" fill="#5f79cc"/></svg>
<svg class="b" style="left:1525px;top:690px;" width="50" height="40" viewBox="0 0 50 40" fill="none"><path d="M8.4 8 A30.5 25.5 0 0 0 38.8 33.5" stroke="#cfcfcf" stroke-width="1.3" fill="none"/></svg>
<div class="b" style="left:1608px;top:664px;width:344px;height:60px;background:#efefef;border-radius:0 30px 30px 30px;"></div>
<div class="t" style="left:1635.00px;top:681.00px;font-size:19.50px;letter-spacing:0.331px;color:#111;">Your current balance is $<span class="one"></span><span class="one"></span>25.<span class="one"></span>2.</div>
<svg class="b" style="left:1498px;top:710px;" width="8" height="28" viewBox="0 0 8 28" fill="none"><g fill="#000"><rect x="3" y="5" width="2" height="2"/><rect x="3" y="9" width="2" height="2"/><rect x="3" y="13" width="2" height="2"/><rect x="3" y="17" width="2" height="2"/><rect x="3" y="21" width="2" height="2"/></g></svg>
<div class="b" style="left:165.5px;top:1256px;width:123.5px;height:44.7px;border:1.3px solid #bdbdbd;border-radius:6px;background:#fff;"></div>
<div class="t" style="left:188.00px;top:1268.00px;font-size:20.00px;letter-spacing:-0.810px;color:#ababab;font-weight:700;">Previous</div>
<div class="t" style="left:758.00px;top:1263.00px;font-size:19.00px;letter-spacing:0.700px;color:#222;"><span class="one"></span>0 / page</div>
<svg class="b" style="left:870px;top:1262px;" width="20" height="20" viewBox="0 0 20 20" fill="none"><path d="M5 7 L13.6 7 L9.3 13 Z" fill="#6a6a6a"/></svg>
<div class="b" style="left:758px;top:1293.6px;width:133px;height:1.6px;background:#c2c2c2;"></div>
<div class="b" style="left:1360.2px;top:1256px;width:106.5px;height:44.7px;border:1.8px solid #0d6efd;border-radius:6px;background:rgba(255,255,255,0.4);box-shadow:0 2px 4px rgba(0,0,0,0.08);"></div>
<div class="t" style="left:1393.80px;top:1268.00px;font-size:20.00px;letter-spacing:-0.938px;color:#0d6efd;font-weight:700;">Next</div>
</body></html>
